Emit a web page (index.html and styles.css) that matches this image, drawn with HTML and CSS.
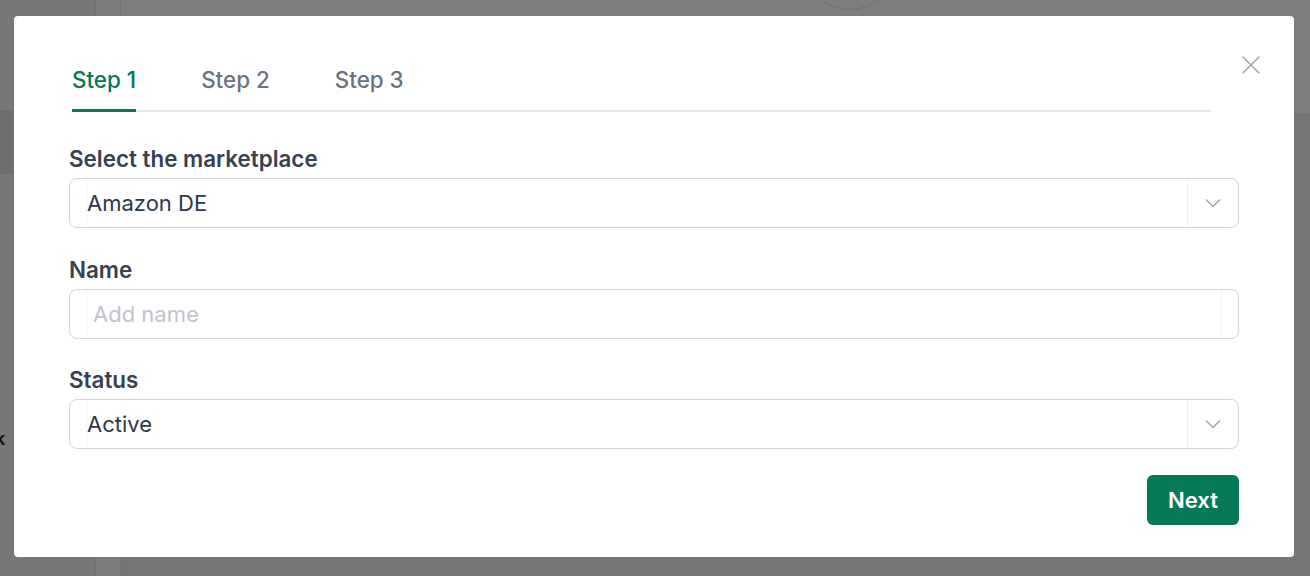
FILE: index.html
```html
<!DOCTYPE html>
<html lang="en">
<head>
<meta charset="utf-8">
<title>Marketplace</title>
<link rel="stylesheet" href="styles.css">
</head>
<body>
<div class="page">
  <aside class="sidebar">
    <div class="side-top"></div>
    <div class="side-active"></div>
    <div class="side-item">k</div>
  </aside>
  <div class="rail"></div>
  <main class="main">
    <header class="header"><div class="avatar"></div></header>
    <div class="content"></div>
  </main>
</div>
<div class="overlay">
  <div class="modal">
    <button class="close" aria-label="Close">
      <svg width="18" height="18" viewBox="0 0 18 18"><path d="M1 1L17 17M17 1L1 17" stroke="#9ca3af" stroke-width="1.5" fill="none" stroke-linecap="round"/></svg>
    </button>
    <nav class="tabs">
      <div class="tab active">Step 1</div>
      <div class="tab">Step 2</div>
      <div class="tab">Step 3</div>
    </nav>
    <form class="form">
      <div class="field">
        <label class="label">Select the marketplace</label>
        <div class="box select">
          <span class="value">Amazon DE</span>
          <span class="chev"><svg width="16" height="10" viewBox="0 0 16 10"><path d="M1 1.5L8 8.5L15 1.5" stroke="#9ca3af" stroke-width="1.3" fill="none"/></svg></span>
        </div>
      </div>
      <div class="field">
        <label class="label">Name</label>
        <div class="box input">
          <span class="placeholder">Add name</span>
          <span class="right-line"></span>
        </div>
      </div>
      <div class="field">
        <label class="label">Status</label>
        <div class="box select">
          <span class="value">Active</span>
          <span class="chev"><svg width="16" height="10" viewBox="0 0 16 10"><path d="M1 1.5L8 8.5L15 1.5" stroke="#9ca3af" stroke-width="1.3" fill="none"/></svg></span>
        </div>
      </div>
      <div class="actions">
        <button type="button" class="next">Next</button>
      </div>
    </form>
  </div>
</div>
</body>
</html>
```

FILE: styles.css
```css
* { box-sizing: border-box; }
html, body { margin: 0; padding: 0; }
body {
  width: 1310px;
  height: 576px;
  overflow: hidden;
  font-family: Inter, "Noto Sans", sans-serif;
  background: #e9eaeb;
  position: relative;
}
.page { display: flex; height: 576px; }
.sidebar {
  width: 95px;
  background: #f1f1f1;
  display: flex;
  flex-direction: column;
}
.side-top { height: 110px; }
.side-active { height: 64px; background: #dcdedf; }
.side-item {
  margin-top: 255px;
  font-size: 18px;
  font-weight: 600;
  color: #1f2937;
  line-height: 20px;
  margin-left: -5px;
}
.rail { width: 26px; background: #f7f7f7; border-left: 1px solid #e5e5e5; border-right: 1px solid #e5e5e5; }
.main { flex: 1; display: flex; flex-direction: column; }
.header { height: 115px; background: #fafafa; border-bottom: 1px solid #dedede; position: relative; }
.avatar {
  position: absolute;
  left: 683px;
  top: -82px;
  width: 92px;
  height: 92px;
  border-radius: 50%;
  border: 1px solid #e2e2e2;
}
.content { flex: 1; background: #ededed; }

.overlay {
  position: absolute;
  inset: 0;
  background: rgba(0, 0, 0, 0.5);
}
.modal {
  position: absolute;
  left: 14px;
  top: 16px;
  width: 1280px;
  height: 541px;
  background: #fff;
  border-radius: 4px;
  padding: 50px 55px 32px 55px;
}
.close {
  position: absolute;
  top: 40px;
  right: 34px;
  width: 18px;
  height: 18px;
  padding: 0;
  border: 0;
  background: none;
  display: flex;
}
.tabs {
  display: flex;
  gap: 65px;
  margin-left: 3px;
  margin-right: 28px;
  border-bottom: 2px solid #e5e7eb;
}
.tab {
  font-size: 22.4px;
  font-weight: 500;
  line-height: 28px;
  color: #6b7280;
  padding-bottom: 15px;
  margin-bottom: -2px;
  border-bottom: 3px solid transparent;
}
.tab.active { color: #047857; border-bottom-color: #047857; }

.form { display: flex; flex-direction: column; margin-top: 33px; }
.field { display: flex; flex-direction: column; margin-bottom: 28px; }
.field:nth-child(2) { margin-bottom: 27px; }
.field:nth-child(3) { margin-bottom: 26px; }
.label {
  font-size: 22.4px;
  font-weight: 600;
  line-height: 28px;
  color: #374151;
  margin-bottom: 5px;
}
.box {
  height: 50px;
  border: 1px solid #d1d5db;
  border-radius: 8px;
  display: flex;
  align-items: center;
  position: relative;
  background: #fff;
}
.box::before {
  content: "";
  position: absolute;
  left: 16px;
  top: 0;
  bottom: 0;
  width: 1px;
  background: #f3f4f6;
}
.value {
  font-size: 22px;
  color: #2d3748;
  padding-left: 17px;
  flex: 1;
}
.chev {
  width: 51px;
  align-self: stretch;
  border-left: 1px solid #f0f1f3;
  display: flex;
  align-items: center;
  justify-content: center;
}
.placeholder {
  font-size: 22px;
  color: #bfc4cc;
  padding-left: 23px;
  flex: 1;
}
.right-line {
  width: 17px;
  align-self: stretch;
  border-left: 1px solid #f3f4f6;
}
.actions { display: flex; justify-content: flex-end; }
.next {
  width: 92px;
  height: 50px;
  border: 0;
  border-radius: 6px;
  background: #047857;
  color: #fff;
  font-family: Inter, "Noto Sans", sans-serif;
  font-size: 22px;
  font-weight: 600;
}
```
